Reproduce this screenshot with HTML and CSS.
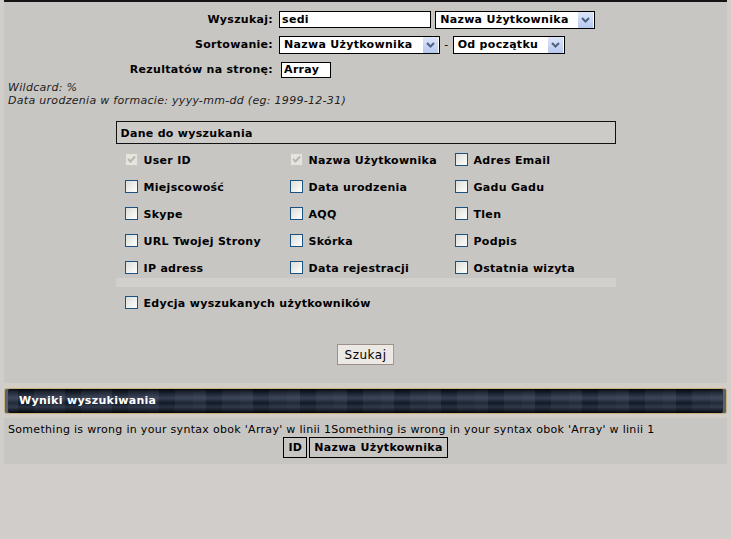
FILE: index.html
```html
<!DOCTYPE html>
<html lang="pl">
<head>
    <meta charset="UTF-8">
    <title>Szukaj użytkowników</title>
    <link rel="stylesheet" href="styles.css">
</head>
<body>
    <div class="page">
        <form class="search" onsubmit="return false">
            <div class="fields-wrap">
            <table class="fields">
                <tr>
                    <td class="lbl">Wyszukaj:</td>
                    <td class="val">
                        <span class="txt w152">sedi</span>
                        <span class="sel w160">Nazwa Użytkownika<span class="arrow"><svg width="15" height="15" viewBox="0 0 15 15"><path d="M4 6 L7.5 9.5 L11 6" fill="none" stroke="#4d6185" stroke-width="2"/></svg></span></span>
                    </td>
                </tr>
                <tr>
                    <td class="lbl">Sortowanie:</td>
                    <td class="val">
                        <span class="sel w161">Nazwa Użytkownika<span class="arrow"><svg width="15" height="15" viewBox="0 0 15 15"><path d="M4 6 L7.5 9.5 L11 6" fill="none" stroke="#4d6185" stroke-width="2"/></svg></span></span>
                        <span class="dash">-</span>
                        <span class="sel w112">Od początku<span class="arrow"><svg width="15" height="15" viewBox="0 0 15 15"><path d="M4 6 L7.5 9.5 L11 6" fill="none" stroke="#4d6185" stroke-width="2"/></svg></span></span>
                    </td>
                </tr>
                <tr>
                    <td class="lbl">Rezultatów na stronę:</td>
                    <td class="val"><span class="txt w50 narrow">Array</span></td>
                </tr>
            </table>
            </div>

            <div class="hint">Wildcard: %<br>Data urodzenia w formacie: yyyy-mm-dd (eg: 1999-12-31)</div>

            <div class="opts">
                <div class="opts-head">Dane do wyszukania</div>
                <div class="opts-grid">
                    <label class="opt"><span class="cb checked"><svg width="9" height="9" viewBox="0 0 9 9"><path d="M1 4 L3.5 6.5 L8 1.5" fill="none" stroke="#b8b6ad" stroke-width="2"/></svg></span>User ID</label>
                    <label class="opt"><span class="cb checked"><svg width="9" height="9" viewBox="0 0 9 9"><path d="M1 4 L3.5 6.5 L8 1.5" fill="none" stroke="#b8b6ad" stroke-width="2"/></svg></span>Nazwa Użytkownika</label>
                    <label class="opt"><span class="cb"></span>Adres Email</label>
                    <label class="opt"><span class="cb"></span>Miejscowość</label>
                    <label class="opt"><span class="cb"></span>Data urodzenia</label>
                    <label class="opt"><span class="cb"></span>Gadu Gadu</label>
                    <label class="opt"><span class="cb"></span>Skype</label>
                    <label class="opt"><span class="cb"></span>AQQ</label>
                    <label class="opt"><span class="cb"></span>Tlen</label>
                    <label class="opt"><span class="cb"></span>URL Twojej Strony</label>
                    <label class="opt"><span class="cb"></span>Skórka</label>
                    <label class="opt"><span class="cb"></span>Podpis</label>
                    <label class="opt"><span class="cb"></span>IP adress</label>
                    <label class="opt"><span class="cb"></span>Data rejestracji</label>
                    <label class="opt"><span class="cb"></span>Ostatnia wizyta</label>
                </div>
                <div class="opts-sep"></div>
                <label class="opt edit"><span class="cb"></span>Edycja wyszukanych użytkowników</label>
            </div>

            <div class="submit"><button class="btn">Szukaj</button></div>
        </form>

        <div class="bar-wrap">
            <div class="bar">Wyniki wyszukiwania</div>
        </div>
        <div class="error">Something is wrong in your syntax obok 'Array' w linii 1Something is wrong in your syntax obok 'Array' w linii 1</div>
        <table class="results">
            <tr><th>ID</th><th>Nazwa Użytkownika</th></tr>
        </table>
    </div>
</body>
</html>
```

FILE: styles.css
```css
body {
    margin: 0;
    background-color: #d0cdcb;
    font-family: Verdana, "DejaVu Sans", sans-serif;
    font-size: 11px;
    letter-spacing: 0.3px;
    color: #000;
}
.page {
    margin: 0 4px;
    background-color: #c8c6c3;
    border-top: 2px solid #141414;
    padding-bottom: 4px;
}
.fields-wrap {
    padding-right: 6px;
}
.fields {
    margin: 5px auto 0;
    border-collapse: collapse;
}
.fields td {
    padding: 2px 3px;
    height: 21px;
}
.lbl {
    text-align: right;
    font-weight: bold;
}
.val {
    font-weight: bold;
}
.txt, .sel {
    display: inline-block;
    vertical-align: middle;
    box-sizing: border-box;
    height: 17px;
    line-height: 15px;
    background-color: #fff;
    border: 1px solid #000;
    padding: 0 2px;
    white-space: nowrap;
}
.narrow { height: 16px; line-height: 14px; }
.sel {
    position: relative;
    padding-left: 4px;
    height: 18px;
    line-height: 16px;
}
.arrow {
    position: absolute;
    right: 1px;
    top: 0;
    width: 15px;
    height: 16px;
    background: linear-gradient(#dde7fa, #b7c8ef);
    border-left: 1px solid #fff;
    display: flex;
    align-items: center;
    justify-content: center;
}
.w152 { width: 152px; }
.w160 { width: 160px; }
.w161 { width: 161px; }
.w112 { width: 112px; }
.w50 { width: 50px; margin-left: 2px; }
.dash {
    font-weight: normal;
    margin: 0;
}
.hint {
    font-style: italic;
    color: #222;
    margin: -1px 4px 0;
    line-height: 13px;
}
.opts {
    width: 500px;
    margin: 14px auto 0;
}
.opts-head {
    border: 1px solid #111;
    background-color: #cdcbc8;
    font-weight: bold;
    padding: 5px 4px 3px;
    line-height: 13px;
}
.opts-grid {
    display: grid;
    grid-template-columns: 165px 165px 165px;
    padding: 9px 0 0 9px;
    row-gap: 11px;
}
.opt {
    display: flex;
    align-items: flex-start;
    gap: 6px;
    font-weight: bold;
    height: 16px;
    line-height: 16px;
    white-space: nowrap;
}
.cb {
    box-sizing: border-box;
    width: 13px;
    height: 13px;
    border: 1px solid #1c5180;
    background: linear-gradient(135deg, #dcdcd7, #fff);
    display: flex;
    align-items: center;
    justify-content: center;
    margin-top: 0;
}
.cb.checked {
    border-color: #cac8bf;
    background: #e6e4de;
}
.opts-sep {
    height: 9px;
    background-color: #d2d0cd;
    margin-top: 1px;
}
.opt.edit {
    margin: 9px 0 0 9px;
}
.submit {
    text-align: center;
    margin-top: 32px;
}
.btn {
    font-family: Verdana, "DejaVu Sans", sans-serif;
    font-size: 12px;
    letter-spacing: 0.5px;
    background-color: #ece9e4;
    border: 1px solid #9c8f88;
    border-right-color: #a7978c;
    padding: 1px 7px;
    height: 21px;
    color: #000;
}
.bar-wrap {
    margin-top: 18px;
    background-color: #d3cec5;
    padding: 5px 0 4px;
}
.bar {
    height: 24px;
    line-height: 24px;
    border: 1px solid #c7b27e;
    border-radius: 3px;
    background-color: #151c2b;
    background-image:
        linear-gradient(to bottom, rgba(0,0,0,0.8) 0, rgba(0,0,0,0) 3px, rgba(120,135,165,0.35) 9px, rgba(0,0,0,0) 14px, rgba(90,105,135,0.3) 18px, rgba(0,0,0,0.8) 24px),
        repeating-linear-gradient(90deg, rgba(255,255,255,0.06) 0 13px, rgba(0,0,0,0.12) 13px 29px, rgba(255,255,255,0.04) 29px 47px);
    box-shadow: inset 3px 0 0 #5b6270, inset -3px 0 0 #5b6270;
    color: #fff;
    font-weight: bold;
    font-size: 11px;
    padding-left: 14px;
}
.error {
    margin: 4px 4px 0;
    line-height: 16px;
}
.results {
    margin: -3px auto 0;
    border-collapse: separate;
    border-spacing: 2px;
}
.results th {
    border: 1px solid #000;
    padding: 3px 4px 2px;
    font-size: 11px;
    line-height: 14px;
}
```
